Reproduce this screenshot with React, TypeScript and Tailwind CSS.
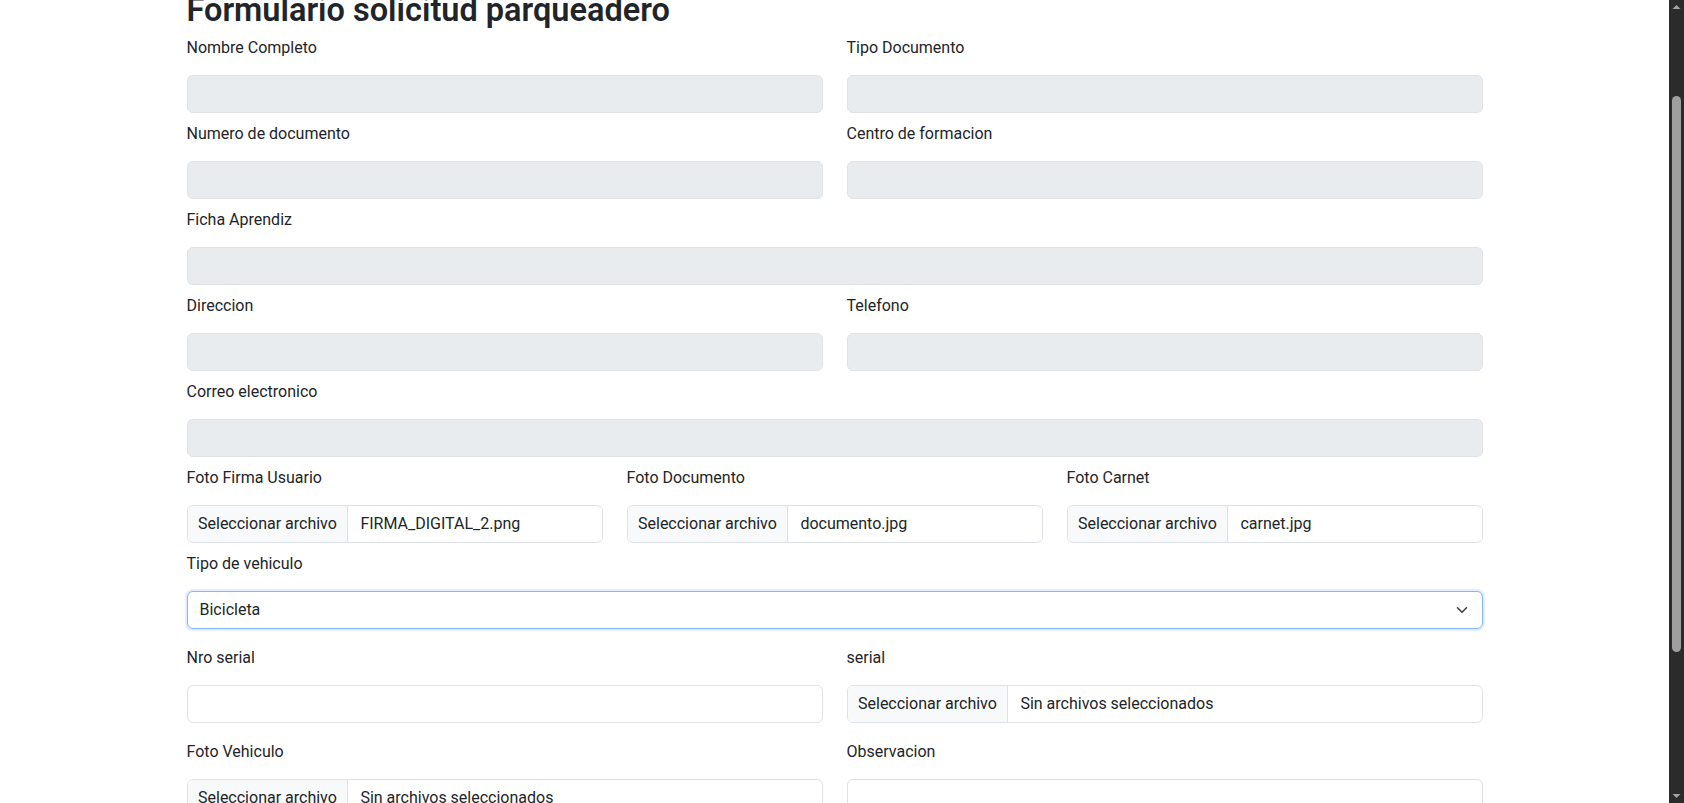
import React from 'react';

const font = "font-['Roboto','Liberation_Sans',sans-serif]";

function Label({ children }: { children: React.ReactNode }) {
  return <label className="mb-[15px] block text-base leading-6 text-[#212529]">{children}</label>;
}

function DisabledInput() {
  return <div className="h-[38px] w-full rounded-md border border-[#dee2e6] bg-[#e9ecef]" />;
}

function TextInput() {
  return <div className="h-[38px] w-full rounded-md border border-[#dee2e6] bg-white" />;
}

function FileInput({ file }: { file: string }) {
  return (
    <div className="flex h-[38px] w-full items-stretch overflow-hidden rounded-md border border-[#dee2e6] bg-white text-base">
      <span className="flex items-center border-r border-[#dee2e6] bg-[#f8f9fa] px-[10.5px] whitespace-nowrap">
        Seleccionar archivo
      </span>
      <span className="flex items-center px-3 whitespace-nowrap">{file}</span>
    </div>
  );
}

function Field({
  label,
  children,
  className = 'mb-[9px]',
}: {
  label: string;
  children: React.ReactNode;
  className?: string;
}) {
  return (
    <div className={className}>
      <Label>{label}</Label>
      {children}
    </div>
  );
}

function Scrollbar() {
  return (
    <div className="flex h-full w-[15px] shrink-0 flex-col items-center bg-[#2b2b2b]">
      <svg width="15" height="15" viewBox="0 0 15 15" className="shrink-0">
        <polygon points="3.5,9 7.5,5 11.5,9" fill="#a3a3a3" />
      </svg>
      <div className="mt-[81px] h-[556px] w-[9px] rounded-full bg-[#9f9f9f]" />
      <div className="flex-1" />
      <svg width="15" height="15" viewBox="0 0 15 15" className="shrink-0">
        <polygon points="3.5,6 7.5,10 11.5,6" fill="#a3a3a3" />
      </svg>
    </div>
  );
}

export default function App() {
  return (
    <div className={`flex h-[803px] w-full overflow-hidden bg-white text-[#212529] ${font}`}>
      <div className="min-w-0 flex-1 overflow-hidden">
        <div className="mx-auto max-w-[1320px] px-3">
          <h2 className="mt-[-9px] mb-[6px] text-[32.5px] leading-[1.2] font-semibold">
            Formulario solicitud parqueadero
          </h2>

          <div className="grid grid-cols-2 gap-x-6">
            <Field label="Nombre Completo">
              <DisabledInput />
            </Field>
            <Field label="Tipo Documento">
              <DisabledInput />
            </Field>
            <Field label="Numero de documento">
              <DisabledInput />
            </Field>
            <Field label="Centro de formacion">
              <DisabledInput />
            </Field>
          </div>

          <Field label="Ficha Aprendiz">
            <DisabledInput />
          </Field>

          <div className="grid grid-cols-2 gap-x-6">
            <Field label="Direccion">
              <DisabledInput />
            </Field>
            <Field label="Telefono">
              <DisabledInput />
            </Field>
          </div>

          <Field label="Correo electronico">
            <DisabledInput />
          </Field>

          <div className="grid grid-cols-3 gap-x-6">
            <Field label="Foto Firma Usuario">
              <FileInput file="FIRMA_DIGITAL_2.png" />
            </Field>
            <Field label="Foto Documento">
              <FileInput file="documento.jpg" />
            </Field>
            <Field label="Foto Carnet">
              <FileInput file="carnet.jpg" />
            </Field>
          </div>

          <Field label="Tipo de vehiculo" className="mb-[17px]">
            <div className="flex h-[38px] w-full items-center justify-between rounded-md border border-[#86b7fe] bg-white px-3 shadow-[0_0_0_2px_rgba(13,110,253,0.12)]">
              <span>Bicicleta</span>
              <svg width="12" height="12" viewBox="0 0 16 16" fill="none" className="mr-[2px]">
                <path d="m2 5 6 6 6-6" stroke="#343a40" strokeWidth="2" strokeLinecap="round" strokeLinejoin="round" />
              </svg>
            </div>
          </Field>

          <div className="grid grid-cols-2 gap-x-6">
            <Field label="Nro serial" className="mb-[17px]">
              <TextInput />
            </Field>
            <Field label="serial" className="mb-[17px]">
              <FileInput file="Sin archivos seleccionados" />
            </Field>
            <Field label="Foto Vehiculo" className="mb-[17px]">
              <FileInput file="Sin archivos seleccionados" />
            </Field>
            <Field label="Observacion" className="mb-[17px]">
              <div className="h-[62px] w-full rounded-md border border-[#dee2e6] bg-white" />
            </Field>
          </div>
        </div>
      </div>
      <Scrollbar />
    </div>
  );
}
